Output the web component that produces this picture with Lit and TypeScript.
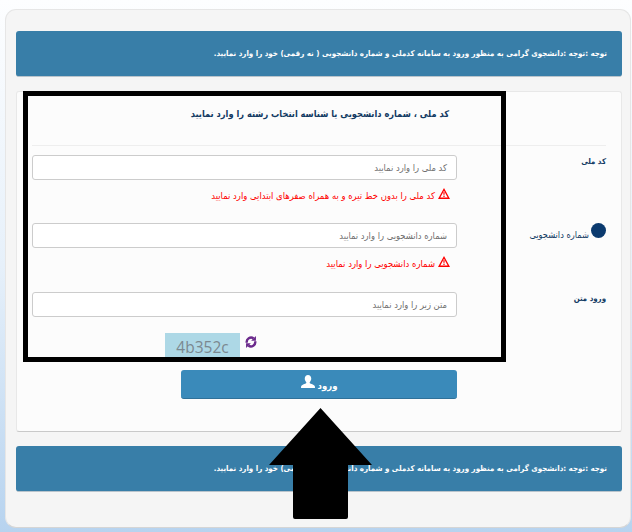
import { LitElement, html, css } from "lit";
import { customElement } from "lit/decorators.js";

const warn = html`<svg class="warn" viewBox="0 0 12 11"><path fill="#ff0000" fill-rule="evenodd" d="M6 0 12 11H0ZM6 2.8 2.3 9.5H9.7ZM5.3 4.2H6.7L6.4 7.2H5.6ZM5.4 7.7H6.6V8.9H5.4Z"/></svg>`;

const NOTE = "توجه :توجه :دانشجوی گرامی به منظور ورود به سامانه کدملی و شماره دانشجویی ( نه رقمی) خود را وارد نمایید.";

@customElement("app-root")
export class AppRoot extends LitElement {
  static styles = css`
    :host {
      display: block;
      position: relative;
      width: 632px;
      height: 532px;
      overflow: hidden;
      box-sizing: border-box;
      padding: 9px 1px 0 5px;
      background: linear-gradient(180deg, #fdfeff 0%, #e6f0fa 50%, #b7d3ef 100%);
      font-family: "DejaVu Sans Condensed", "DejaVu Sans", sans-serif;
      font-stretch: condensed;
      font-size: 9.2px;
      direction: rtl;
    }
    .well {
      box-sizing: border-box;
      height: 519px;
      background: #f5f5f5;
      border: 1px solid #e6e6e6;
      border-bottom-color: #d5d5d5;
      border-radius: 11px;
      padding: 21px 8px 0 10px;
      display: flex;
      flex-direction: column;
    }
    .alert {
      box-sizing: border-box;
      height: 46px;
      flex: none;
      background: #387ea8;
      color: #fff;
      border-radius: 3px;
      border-bottom: 1px solid #b9c4cc;
      padding: 0 15px;
      display: flex;
      align-items: center;
      font-weight: bold;
      font-size: 7.9px;
      white-space: nowrap;
    }
    .panel {
      box-sizing: border-box;
      height: 341px;
      margin: 14px 0 14px;
      background: #fcfcfc;
      border: 1px solid #e8e8e8;
      border-bottom-color: #c9c9c9;
      border-radius: 3px;
      padding: 0 15px;
    }
    .head {
      height: 54px;
      box-sizing: border-box;
      border-bottom: 1px solid #eeeeee;
      padding: 16px 157px 0 0;
      font-weight: bold;
      font-size: 9.2px;
      color: #123a63;
    }
    .rows {
      display: grid;
      grid-template-columns: 149px 425px;
      grid-template-rows: 68px 69px 78px auto;
      padding-top: 9px;
    }
    .label {
      font-weight: bold;
      font-size: 7.8px;
      color: #123a63;
      padding-top: 2px;
    }
    .radio {
      display: flex;
      align-items: flex-start;
      gap: 2px;
      padding-top: 0;
      font-weight: normal;
      font-size: 9.2px;
    }
    .dot {
      width: 15px;
      height: 15px;
      border-radius: 50%;
      background: #0b3a6e;
      flex: none;
    }
    .radio span { margin-top: 6px; }
    .field {
      box-sizing: border-box;
      height: 25px;
      background: #fff;
      border: 1px solid #cccccc;
      border-radius: 3px;
      padding: 0 9px;
      display: flex;
      align-items: center;
      color: #6f6f6f;
      font-size: 9.3px;
    }
    .err {
      margin-top: 8px;
      padding-right: 7px;
      color: #ff0000;
      font-size: 9.4px;
      display: flex;
      align-items: flex-start;
      gap: 3px;
      white-space: nowrap;
    }
    .err span { margin-top: 2px; }
    .warn { width: 12px; height: 11px; flex: none; }
    .captcha {
      display: flex;
      align-items: flex-start;
      gap: 5px;
      padding-right: 200px;
      margin-top: 16px;
    }
    .cap-img {
      width: 75px;
      height: 28px;
      background: #add8e6;
      color: #7b8890;
      font-size: 15.5px;
      font-family: "Open Sans", "DejaVu Sans", sans-serif;
      font-stretch: normal;
      direction: ltr;
      text-align: center;
      line-height: 28px;
    }
    .refresh { width: 12px; height: 12px; margin-top: 3px; }
    .action { grid-column: 2; }
    button {
      display: flex;
      align-items: center;
      justify-content: center;
      gap: 3px;
      box-sizing: border-box;
      width: 276px;
      height: 29px;
      background: #3a8aba;
      color: #fff;
      border: none;
      border-bottom: 1px solid #2f7199;
      border-radius: 3px;
      font: bold 9.5px "DejaVu Sans Condensed", "DejaVu Sans", sans-serif;
      font-stretch: condensed;
      padding: 0;
    }
    button span { margin-top: 3px; }
    button svg { width: 14px; height: 13px; margin-bottom: 5px; }
    .frame {
      position: absolute;
      left: 23px;
      top: 91px;
      width: 483px;
      height: 271px;
      box-sizing: border-box;
      border: 5px solid #000;
    }
    .arrow {
      position: absolute;
      left: 268px;
      top: 407px;
      width: 105px;
      height: 113px;
    }
  `;

  render() {
    return html`
      <div class="well">
        <div class="alert">${NOTE}</div>
        <div class="panel">
          <div class="head">کد ملی ، شماره دانشجویی یا شناسه انتخاب رشته را وارد نمایید</div>
          <div class="rows">
            <div class="label">کد ملی</div>
            <div>
              <div class="field">کد ملی را وارد نمایید</div>
              <div class="err">${warn}<span>کد ملی را بدون خط تیره و به همراه صفرهای ابتدایی وارد نمایید</span></div>
            </div>
            <div class="label radio"><i class="dot"></i><span>شماره دانشجویی</span></div>
            <div>
              <div class="field">شماره دانشجویی را وارد نمایید</div>
              <div class="err">${warn}<span>شماره دانشجویی را وارد نمایید</span></div>
            </div>
            <div class="label">ورود متن</div>
            <div>
              <div class="field">متن زیر را وارد نمایید</div>
              <div class="captcha">
                <svg class="refresh" viewBox="0 0 16 16"><path fill="none" stroke="#6b2a8c" stroke-width="3.2" d="M2.5 9A5.6 5.6 0 0 1 11.5 3.4M13.5 7A5.6 5.6 0 0 1 4.5 12.6"/><path fill="#6b2a8c" d="M14.6 0V6.4H8.2ZM1.4 16V9.6H7.8Z"/></svg>
                <div class="cap-img">4b352c</div>
              </div>
            </div>
            <div class="action">
              <button>
                <span>ورود</span>
                <svg viewBox="0 0 15 14"><path fill="#fff" d="M7.5 0C9.6 0 11 1.7 11 3.9 11 5.6 10.2 7 9.3 7.8 9.2 8.6 9.6 9 10.6 9.4 12.6 10.2 15 10.8 15 12.6V14H0V12.6C0 10.8 2.4 10.2 4.4 9.4 5.4 9 5.8 8.6 5.7 7.8 4.8 7 4 5.6 4 3.9 4 1.7 5.4 0 7.5 0Z"/></svg>
              </button>
            </div>
          </div>
        </div>
        <div class="alert">${NOTE}</div>
      </div>
      <div class="frame"></div>
      <svg class="arrow" viewBox="0 0 105 113"><path d="M52.5 1 104 58H80V110Q80 112 78 112H27Q25 112 25 110V58H1Z"/></svg>
    `;
  }
}
